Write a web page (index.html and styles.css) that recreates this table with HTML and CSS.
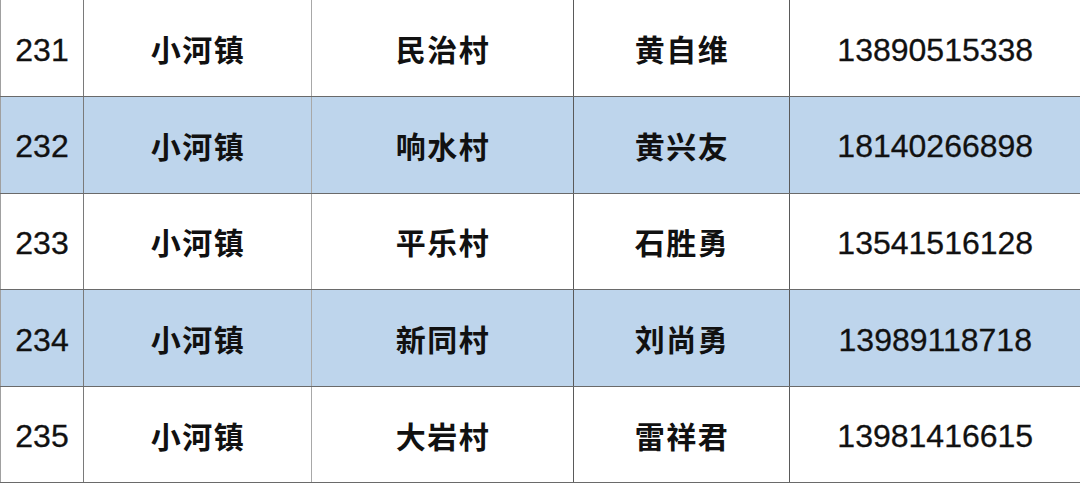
FILE: index.html
```html
<!DOCTYPE html>
<html>
<head>
<meta charset="utf-8">
<link rel="stylesheet" href="styles.css">
</head>
<body>
<table class="grid">
  <colgroup>
    <col class="c1"><col class="c2"><col class="c3"><col class="c4"><col class="c5">
  </colgroup>
  <tr class="row">
    <td class="num">231</td><td class="cn">小河镇</td><td class="cn">民治村</td><td class="cn">黄自维</td><td class="num">13890515338</td>
  </tr>
  <tr class="row alt">
    <td class="num">232</td><td class="cn">小河镇</td><td class="cn">响水村</td><td class="cn">黄兴友</td><td class="num">18140266898</td>
  </tr>
  <tr class="row">
    <td class="num">233</td><td class="cn">小河镇</td><td class="cn">平乐村</td><td class="cn">石胜勇</td><td class="num">13541516128</td>
  </tr>
  <tr class="row alt">
    <td class="num">234</td><td class="cn">小河镇</td><td class="cn">新同村</td><td class="cn">刘尚勇</td><td class="num">13989118718</td>
  </tr>
  <tr class="row">
    <td class="num">235</td><td class="cn">小河镇</td><td class="cn">大岩村</td><td class="cn">雷祥君</td><td class="num">13981416615</td>
  </tr>
</table>
</body>
</html>
```
FILE: styles.css
```css
html, body {
  margin: 0;
  padding: 0;
  background: #ffffff;
}
.grid {
  width: 1080px;
  border-collapse: collapse;
  table-layout: fixed;
}
.c1 { width: 83px; }
.c2 { width: 228px; }
.c3 { width: 262px; }
.c4 { width: 216px; }
.c5 { width: 291px; }
.row { height: 96.6px; }
.alt { background: #bed5ec; }
.grid td {
  border-left: 1px solid #5a5a5a;
  border-bottom: 1px solid #6a6a6a;
  text-align: center;
  vertical-align: middle;
  padding: 0;
  color: #111111;
}
.grid td:nth-child(1) { border-left: 1px solid #a0a0a0; }
.grid td:nth-child(2) { border-left: 1px solid #7a7a7a; }
.grid td:nth-child(3) { border-left: 1px solid #a8a8a8; }
.num {
  font-family: "Liberation Sans", Arial, sans-serif;
  font-size: 32px;
  padding-top: 4px !important;
  -webkit-text-stroke: 0.3px #111111;
}
.cn {
  font-family: "Noto Sans CJK SC", sans-serif;
  font-weight: bold;
  font-size: 30px;
  letter-spacing: 1.5px;
  padding-left: 1px !important;
}
```
